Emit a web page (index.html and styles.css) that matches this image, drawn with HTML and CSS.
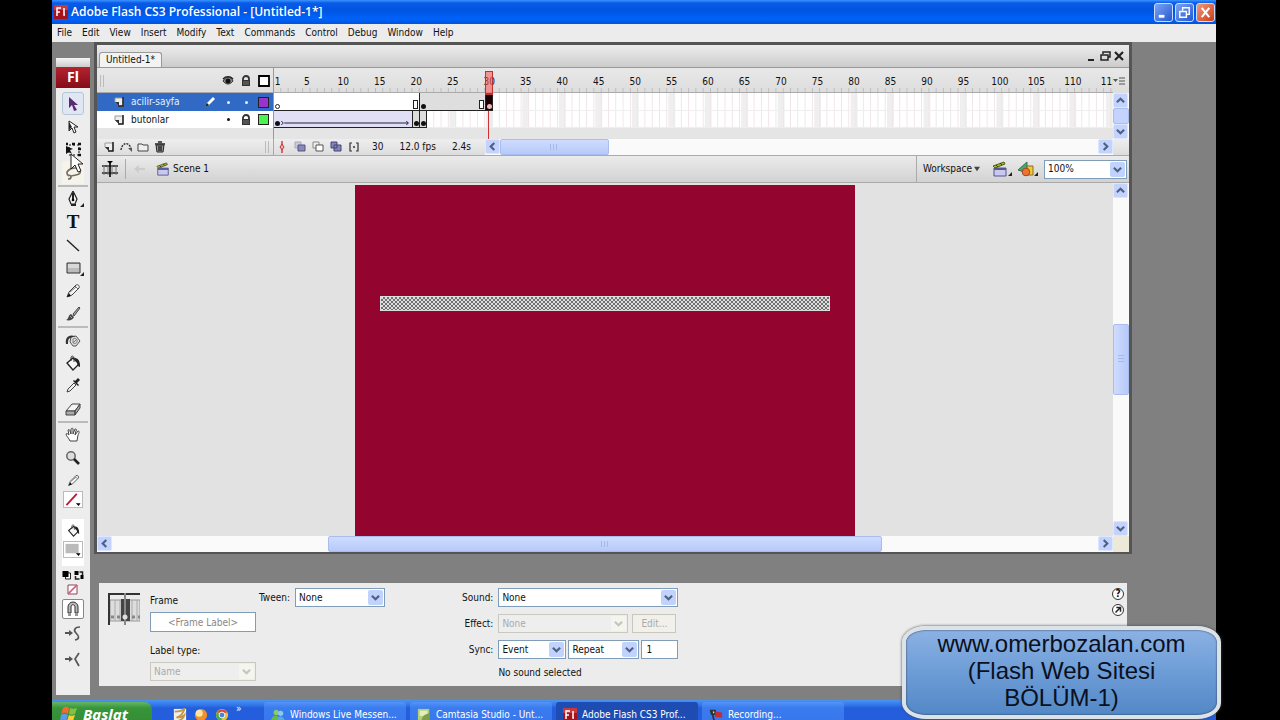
FILE: index.html
```
<!DOCTYPE html>
<html lang="en">
<head>
    <meta charset="UTF-8">
    <meta name="viewport" content="width=device-width, initial-scale=1.0">
    <title>Adobe Flash CS3 Professional - [Untitled-1*]</title>
    <link rel="stylesheet" href="styles.css">
</head>
<body>
    <!-- Shared icons -->
    <svg class="defs" aria-hidden="true">
        <symbol id="down" viewBox="0 0 10 10"><path d="M1 3l4 4 4-4" fill="none" stroke="currentColor" stroke-width="2.4"/></symbol>
        <symbol id="up" viewBox="0 0 10 10"><path d="M1 7l4-4 4 4" fill="none" stroke="currentColor" stroke-width="2.4"/></symbol>
        <symbol id="left" viewBox="0 0 10 10"><path d="M7 1L3 5l4 4" fill="none" stroke="currentColor" stroke-width="2.4"/></symbol>
        <symbol id="right" viewBox="0 0 10 10"><path d="M3 1l4 4-4 4" fill="none" stroke="currentColor" stroke-width="2.4"/></symbol>
        <symbol id="page" viewBox="0 0 12 12"><path d="M2 2h8v8H6L2 6z" fill="#eee" stroke="#999"/><path d="M2 6h4v4z" fill="#333"/><path d="M10 1v9H5" fill="none" stroke="#222" stroke-width="1.5"/></symbol>
        <symbol id="lock" viewBox="0 0 12 12"><path d="M3 6V4a3 3 0 0 1 6 0v2" fill="none" stroke="#333" stroke-width="1.8"/><path d="M2 5h8v6H2z" fill="#333"/><path d="M3 7h6M3 9h6" stroke="#777"/></symbol>
        <symbol id="clap" viewBox="0 0 16 16"><path d="M2 7h12v8H2z" fill="#c8c8f0" stroke="#555591"/><path d="M2 7h12v2H2z" fill="#555591"/><path d="M1 5l11-4 1 2L3 7z" fill="#a5b52c" stroke="#555c20"/><path d="M4 4l2 2m2-4l2 2" stroke="#333"/></symbol>
        <symbol id="pencil" viewBox="0 0 16 16"><path d="M2 14l2-5 7-7c2-1 4 1 3 3l-7 7z" fill="#f5f5f5" stroke="#444"/><path d="M2 14l2-4 2 3z" fill="#111"/><path d="M10 3l3 3M5 9l6-5" stroke="#777"/></symbol>
        <symbol id="bucket" viewBox="0 0 16 16"><path d="M2 8l6-5 6 6-6 6z" fill="#f6f6f6" stroke="#222" stroke-width="1.3"/><path d="M6 6V3c0-3 3-2 3 0v4" fill="none" stroke="#333"/><path d="M9 3c4 0 6 2 6 9-2 0-3-3-3-5z" fill="#222"/></symbol>
        <symbol id="fl" viewBox="0 0 14 14"><path d="M0 0h14v14H0z" fill="#a5141e"/><path d="M0 0h14v5H0z" fill="#c43a3e"/><path d="M3 11V3h4M3 7h3M10 3v7h1" fill="none" stroke="#fff" stroke-width="1.5"/></symbol>
    </svg>

    <div class="screen">
        <header class="titlebar">
            <svg class="i14"><use href="#fl"/></svg>
            <h1>Adobe Flash CS3 Professional - [Untitled-1*]</h1>
            <button class="win" aria-label="Minimize"><svg viewBox="0 0 18 18"><path d="M4 13h6" stroke="#fff" stroke-width="3"/></svg></button>
            <button class="win" aria-label="Restore"><svg viewBox="0 0 18 18"><path d="M7 7V4h7v7h-3M4 8h7v6H4z" fill="none" stroke="#fff" stroke-width="1.5"/></svg></button>
            <button class="win close" aria-label="Close"><svg viewBox="0 0 18 18"><path d="M5 4l8 10m0-10L5 14" stroke="#fff" stroke-width="2.2"/></svg></button>
        </header>

        <nav class="menubar">
            <button>File</button><button>Edit</button><button>View</button><button>Insert</button><button>Modify</button><button>Text</button><button>Commands</button><button>Control</button><button>Debug</button><button>Window</button><button>Help</button>
        </nav>

        <div class="workspace">
            <aside class="tools">
                <div class="tools-grip"></div>
                <div class="tools-logo">Fl</div>
                <div class="tool-group">
                    <button class="tool active" aria-label="Selection"><svg viewBox="0 0 16 16"><path d="M4 1v11l3-3 2 6 3-1-3-5h4z" fill="#5a2a72"/></svg></button>
                    <button class="tool" aria-label="Subselection"><svg viewBox="0 0 16 16"><path d="M4 2v10l3-3 2 5 2-1-2-5h4z" fill="#fff" stroke="#222"/><path d="M4 3v8l3-3z" fill="#222"/></svg></button>
                    <button class="tool" aria-label="Free Transform"><svg viewBox="0 0 16 16"><path d="M4 3h10v10H4z" fill="none" stroke="#111" stroke-dasharray="2 2"/><path d="M1 4v8l3-2 3 2-2-4 3-1z" fill="#111"/><path d="M1 2h2m4 0h3m3 0h3M13 7h3m-3 6h3" stroke="#111" stroke-width="2.5"/></svg></button>
                    <button class="tool lit" aria-label="Lasso"><svg viewBox="0 0 16 16"><path d="M4 11c-5-3 0-8 6-8 7 0 7 6 1 7l-5 1M3 10c4 0 4 4 0 4" fill="none" stroke="#766f62" stroke-width="1.7"/></svg></button>
                </div>
                <div class="tool-group">
                    <button class="tool more" aria-label="Pen"><svg viewBox="0 0 16 16"><path d="M8 0l4 8-2 5H6L4 8z" fill="#f5f5f5" stroke="#222" stroke-width="1.2"/><path d="M8 2v6M6 14h5" stroke="#222" stroke-width="2"/><circle cx="8" cy="9" r="1.3"/></svg></button>
                    <button class="tool type" aria-label="Text">T</button>
                    <button class="tool" aria-label="Line"><svg viewBox="0 0 16 16"><path d="M2 3l12 11" stroke="#222" stroke-width="1.4"/></svg></button>
                    <button class="tool more" aria-label="Rectangle"><svg viewBox="0 0 16 16"><path d="M2 3h13v10H2z" fill="#bbb" stroke="#333"/><path d="M3 4h11v4H3z" fill="#d8d8d8"/></svg></button>
                    <button class="tool" aria-label="Pencil"><svg><use href="#pencil"/></svg></button>
                    <button class="tool" aria-label="Brush"><svg viewBox="0 0 16 16"><path d="M8 8l6-7 1 1-6 8z" fill="#aaa" stroke="#444"/><path d="M1 14c3-1 2-5 5-6l3 3c-1 3-5 4-8 3z" fill="#444"/><path d="M5 10l2 2" stroke="#aaa"/></svg></button>
                </div>
                <div class="tool-group">
                    <button class="tool" aria-label="Ink Bottle"><svg viewBox="0 0 16 16"><path d="M6 5l5-1 4 5-4 5H8L5 10z" fill="#ddd" stroke="#555"/><path d="M1 12c-1-6 2-10 9-8L5 6c-2 1-2 3-2 6z" fill="#333"/><path d="M8 11l4-4M8 7c2-2 5 1 4 3s-4 2-4 0 0-2 0-3" fill="none" stroke="#777"/></svg></button>
                    <button class="tool" aria-label="Paint Bucket"><svg><use href="#bucket"/></svg></button>
                    <button class="tool" aria-label="Eyedropper"><svg viewBox="0 0 16 16"><path d="M2 14l1-3 6-6 2 2-6 6z" fill="#eee" stroke="#444"/><path d="M8 3l5 5 1-1-2-2 3-3-2-2-3 3-1-1z" fill="#222"/></svg></button>
                    <button class="tool" aria-label="Eraser"><svg viewBox="0 0 16 16"><path d="M1 10l6-7h8l-5 7z" fill="#f5f5f5" stroke="#444"/><path d="M1 10h9v4H1zM10 10l5-7v4l-5 7z" fill="#aaa" stroke="#444"/></svg></button>
                </div>
                <div class="tool-group">
                    <button class="tool" aria-label="Hand"><svg viewBox="0 0 16 16"><path d="M5 14C4 11 1 9 1 7c1-1 2 0 3 1L3 3c1-1 2 0 2 1l1 3V2c1-1 2-1 2 0v5l2-5c1 0 2 0 1 2l-1 4 3-4c2 0 1 2 0 4l-1 6z" fill="#fff" stroke="#444"/></svg></button>
                    <button class="tool" aria-label="Zoom"><svg viewBox="0 0 16 16"><circle cx="6" cy="6" r="4.2" fill="#ddd" stroke="#666" stroke-width="1.5"/><path d="M9 9l5 5" stroke="#222" stroke-width="2.6"/></svg></button>
                    <label class="tool small" for="stroke"><svg><use href="#pencil"/></svg></label>
                    <button class="swatch" id="stroke" aria-label="Stroke color"><svg viewBox="0 0 18 16"><path d="M2 14L13 2" stroke="#c01838" stroke-width="2"/><path d="M12 12h5l-2 3z"/></svg></button>
                </div>
                <div class="fill-group">
                    <label class="tool small" for="fill"><svg><use href="#bucket"/></svg></label>
                    <button class="swatch" id="fill" aria-label="Fill color"><svg viewBox="0 0 18 16"><path d="M1 2h14v10H1z" fill="#bbb"/><path d="M12 12h5l-2 3z"/></svg></button>
                </div>
                <div class="color-options">
                    <button aria-label="Black and white"><svg viewBox="0 0 10 12"><path d="M4 4h5v6H4z" fill="#fff" stroke="#222"/><path d="M1 2h6v6H1z"/></svg></button>
                    <button aria-label="Swap colors"><svg viewBox="0 0 10 12"><path d="M0 2h4v4H0zM6 6h3v4H6z"/><path d="M5 3h3v3M1 7v3h4" fill="none" stroke="#222" stroke-width="1.5"/></svg></button>
                </div>
                <button class="no-color" aria-label="No color"><svg viewBox="0 0 12 12"><path d="M1 1h9v9H1z" fill="#fff" stroke="#8c4656"/><path d="M1 10l9-9" stroke="#cf5b7c" stroke-width="1.7"/></svg></button>
                <button class="tool snap" aria-label="Snap to Objects"><svg viewBox="0 0 16 16"><path d="M3 12V6a5 5 0 0 1 10 0v6h-3V6c0-3-4-3-4 0v6z" fill="#bbb" stroke="#333"/><path d="M3 14h3m4 0h3" stroke="#333"/></svg></button>
                <button class="tool tall" aria-label="Smooth"><svg viewBox="0 0 16 16"><path d="M15 1c-5 0-7 3-4 6s4 6-1 7" fill="none" stroke="#555" stroke-width="1.7"/><path d="M0 7h6" stroke="#555" stroke-width="2"/><path d="M4 4l4 3-4 3z" fill="#555"/></svg></button>
                <button class="tool tall" aria-label="Straighten"><svg viewBox="0 0 16 16"><path d="M14 1l-4 6 4 7" fill="none" stroke="#555" stroke-width="1.7"/><path d="M0 7h5" stroke="#555" stroke-width="2"/><path d="M4 4l4 3-4 3z" fill="#555"/></svg></button>
            </aside>

            <main class="main">
                <section class="document">
                    <div class="tabstrip">
                        <button class="tab">Untitled-1*</button>
                        <div class="doc-buttons">
                            <button aria-label="Minimize document"><svg viewBox="0 0 12 12"><path d="M3 10h6" stroke="#222" stroke-width="2"/></svg></button>
                            <button aria-label="Restore document"><svg viewBox="0 0 12 12"><path d="M4 4V2h7v5H9M2 5h7v5H2z" fill="none" stroke="#222" stroke-width="1.5"/></svg></button>
                            <button aria-label="Close document"><svg viewBox="0 0 12 12"><path d="M2 2l8 8m0-8l-8 8" stroke="#222" stroke-width="2.2"/></svg></button>
                        </div>
                    </div>

                    <div class="timeline">
                        <div class="layers">
                            <div class="layer-head">
                                <span class="grip"></span>
                                <svg class="i12" viewBox="0 0 12 12"><path d="M1 6c3-5 8-5 10 0-3 4-7 4-10 0z" fill="#888" stroke="#333"/><path d="M1 4c3-3 7-3 10 0" fill="none" stroke="#222" stroke-width="1.5"/><circle cx="6" cy="6" r="2.5" fill="#111"/></svg>
                                <svg class="i12"><use href="#lock"/></svg>
                                <svg class="i12" viewBox="0 0 12 12"><path d="M1 1h10v10H1z" fill="#fff" stroke="#000" stroke-width="1.8"/></svg>
                            </div>
                            <div class="layer selected">
                                <svg class="i12"><use href="#page"/></svg>
                                <span>acilir-sayfa</span>
                                <svg class="i12" viewBox="0 0 12 12"><path d="M1 11l2-4 6-6 2 2-6 6z" fill="#fff"/><path d="M1 11l2-4 2 2z" fill="#111"/></svg>
                                <span class="dot"></span>
                                <span class="dot"></span>
                                <span class="chip purple"></span>
                            </div>
                            <div class="layer">
                                <svg class="i12"><use href="#page"/></svg>
                                <span>butonlar</span>
                                <span></span>
                                <span class="dot"></span>
                                <svg class="i12"><use href="#lock"/></svg>
                                <span class="chip green"></span>
                            </div>
                        </div>
                        <div class="frames" id="frames">
                            <div class="ruler"></div>
                            <div class="track first"></div>
                            <div class="track second"></div>
                            <div class="span a1"><i class="key empty"></i><i class="end"></i></div>
                            <div class="span a2"><i class="key"></i><i class="end"></i></div>
                            <div class="span a3"><i class="key"></i></div>
                            <div class="span b1"><i class="key"></i><svg viewBox="0 0 130 6"><path d="M1 1l2 2-2 2M4 3h124m-2-2l2 2-2 2" fill="none" stroke="#224"/></svg></div>
                            <div class="span b2"><i class="key"></i></div>
                            <div class="span b3"><i class="key"></i></div>
                            <div class="playhead"></div>
                        </div>
                        <div class="timeline-side">
                            <button class="panel-menu" aria-label="Panel menu"><svg viewBox="0 0 12 12"><path d="M0 4h5L2.500 7z" fill="#555"/><path d="M6 3h6M6 6h6M6 9h6" stroke="#555"/></svg></button>
                            <div class="scroll vertical">
                                <button aria-label="Scroll up"><svg><use href="#up"/></svg></button>
                                <div class="thumb whole"></div>
                                <button aria-label="Scroll down"><svg><use href="#down"/></svg></button>
                            </div>
                        </div>
                    </div>

                    <div class="timeline-foot">
                        <div class="layer-actions">
                            <button aria-label="Insert Layer"><svg><use href="#page"/></svg></button>
                            <button aria-label="Motion Guide"><svg viewBox="0 0 12 12"><path d="M1 9C2 2 8 0 11 7" fill="none" stroke="#333" stroke-width="1.4" stroke-dasharray="2 1"/><path d="M8 7h4v4z" fill="#555"/></svg></button>
                            <button aria-label="Insert Folder"><svg viewBox="0 0 12 12"><path d="M1 3h4l1 1h5v6H1z" fill="#eee" stroke="#444"/></svg></button>
                            <button aria-label="Delete Layer"><svg viewBox="0 0 12 12"><path d="M2 4h8l-1 7H3z" fill="#999" stroke="#222"/><path d="M1 3h10M4 1h4M5 5v5m2-5v5" stroke="#222" stroke-width="1.4"/></svg></button>
                            <span class="grip"></span>
                        </div>
                        <div class="onion">
                            <button aria-label="Center Frame"><svg viewBox="0 0 12 12"><path d="M6 0v12" stroke="#c33" stroke-width="1.4"/><path d="M6 3l2 3-2 3-2-3z" fill="#eaa" stroke="#c33"/></svg></button>
                            <button aria-label="Onion Skin"><svg viewBox="0 0 12 12"><path d="M1 1h6v6H1z" fill="#c8c8ec" stroke="#aaa"/><path d="M4 4h7v6H4z" fill="#8989bd" stroke="#55557d"/></svg></button>
                            <button aria-label="Onion Skin Outlines"><svg viewBox="0 0 12 12"><path d="M1 1h6v6H1z" fill="#eee" stroke="#888"/><path d="M4 4h7v6H4z" fill="#fff" stroke="#555"/></svg></button>
                            <button aria-label="Edit Multiple Frames"><svg viewBox="0 0 12 12"><path d="M1 1h6v6H1zM4 4h7v6H4z" fill="#8484b8" stroke="#444474"/></svg></button>
                            <button aria-label="Modify Onion Markers"><svg viewBox="0 0 12 12"><path d="M4 2H2v8h2m4-8h2v8H8" fill="none" stroke="#333" stroke-width="1.2"/><path d="M5 6h2" stroke="#333" stroke-width="1.5"/></svg></button>
                            <span class="num">30</span>
                            <span class="fps">12.0 fps</span>
                            <span>2.4s</span>
                        </div>
                        <div class="scroll horizontal">
                            <button aria-label="Scroll left"><svg><use href="#left"/></svg></button>
                            <div class="thumb short"></div>
                            <div class="rest long"></div>
                            <button aria-label="Scroll right"><svg><use href="#right"/></svg></button>
                        </div>
                    </div>

                    <div class="scenebar">
                        <button class="scene-button" aria-label="Show or hide timeline"><svg viewBox="0 0 18 18"><path d="M1 6h16M1 13h16" stroke="#222" stroke-width="1.5"/><path d="M3 5v10m4-10v10m4-10v10m4-10v10" stroke="#777"/><path d="M9 1v16" stroke="#111" stroke-width="1.7"/><path d="M6 1h6L9 4z"/></svg></button>
                        <span class="divider"></span>
                        <button class="back" aria-label="Back"><svg viewBox="0 0 12 12"><path d="M0 6l5-4v3h6v2H5v3z" fill="#ccc"/></svg></button>
                        <svg class="i14"><use href="#clap"/></svg>
                        <span class="scene-name">Scene 1</span>
                        <div class="scene-right">
                            <button class="workspace-menu">Workspace <svg viewBox="0 0 8 8"><path d="M0 1h8L4 7z" fill="#444"/></svg></button>
                            <button class="scene-button more" aria-label="Edit Scene"><svg><use href="#clap"/></svg></button>
                            <button class="scene-button more" aria-label="Edit Symbols"><svg viewBox="0 0 16 16"><path d="M6 5h9v9H6z" fill="#f3ca31" stroke="#85702a"/><path d="M0 9l9-8v11z" fill="#46a868" stroke="#377050"/><circle cx="8" cy="11" r="3.8" fill="#f17332" stroke="#a54627"/></svg></button>
                            <div class="combo zoom">
                                <select aria-label="Zoom level"><option>100%</option></select>
                                <svg><use href="#down"/></svg>
                            </div>
                        </div>
                    </div>

                    <div class="canvas">
                        <div class="pasteboard">
                            <div class="stage"><div class="shape"></div></div>
                        </div>
                        <div class="scroll vertical">
                            <button aria-label="Scroll stage up"><svg><use href="#up"/></svg></button>
                            <div class="rest before"></div>
                            <div class="thumb tall"></div>
                            <div class="rest before"></div>
                            <button aria-label="Scroll stage down"><svg><use href="#down"/></svg></button>
                        </div>
                        <div class="scroll horizontal">
                            <button aria-label="Scroll stage left"><svg><use href="#left"/></svg></button>
                            <div class="rest side"></div>
                            <div class="thumb wide"></div>
                            <div class="rest side"></div>
                            <button aria-label="Scroll stage right"><svg><use href="#right"/></svg></button>
                        </div>
                        <div class="corner"></div>
                    </div>
                </section>

                <section class="properties">
                    <svg class="frame-icon" viewBox="0 0 32 32"><path d="M2 7h30v21H2z" fill="#ddd" stroke="#999"/><path d="M7 7v21m5-21v21m12-21v21m5-21v21" stroke="#aaa"/><path d="M1 32V1h31" fill="none" stroke="#333" stroke-width="2"/><path d="M13 6h9v22h-9z" fill="#444"/><path d="M17 0v32" stroke="#888" stroke-width="2"/><path d="M3 24h9m12 0h8" stroke="#888" stroke-width="3" stroke-dasharray="3 3"/><circle cx="17" cy="24" r="2.500" fill="#ddd"/></svg>
                    <div class="frame-fields">
                        <label for="frame-label">Frame</label>
                        <input id="frame-label" type="text" placeholder="&lt;Frame Label&gt;">
                        <label for="label-type" class="type-label">Label type:</label>
                        <div class="combo disabled">
                            <select id="label-type" disabled><option>Name</option></select>
                            <svg><use href="#down"/></svg>
                        </div>
                    </div>
                    <div class="tween">
                        <label for="tween">Tween:</label>
                        <div class="combo">
                            <select id="tween"><option>None</option></select>
                            <svg><use href="#down"/></svg>
                        </div>
                    </div>
                    <div class="sound-fields">
                        <label for="sound">Sound:</label>
                        <div class="combo">
                            <select id="sound"><option>None</option></select>
                            <svg><use href="#down"/></svg>
                        </div>
                        <label for="effect">Effect:</label>
                        <div class="pair">
                            <div class="combo disabled effect">
                                <select id="effect" disabled><option>None</option></select>
                                <svg><use href="#down"/></svg>
                            </div>
                            <button class="edit" disabled>Edit...</button>
                        </div>
                        <label for="sync">Sync:</label>
                        <div class="pair sync">
                            <div class="combo">
                                <select id="sync"><option>Event</option></select>
                                <svg><use href="#down"/></svg>
                            </div>
                            <div class="combo">
                                <select aria-label="Loop mode"><option>Repeat</option></select>
                                <svg><use href="#down"/></svg>
                            </div>
                            <input type="text" value="1" aria-label="Repeat count">
                        </div>
                        <p>No sound selected</p>
                    </div>
                    <div class="help">
                        <button aria-label="Help">?</button>
                        <button aria-label="Edit ActionScript"><svg viewBox="0 0 12 12"><path d="M3 9l5-5M4 3h5v5" fill="none" stroke="#222" stroke-width="1.8"/></svg></button>
                    </div>
                </section>
            </main>
        </div>

        <footer class="taskbar">
            <button class="start"><svg viewBox="0 0 18 18"><path d="M3 3c3-2 4-1 6 0L8 9C6 8 4 7 1 9z" fill="#f46b30"/><path d="M10 3c2 1 4 1 7 0l-2 6c-3 1-4 1-6 0z" fill="#80c344"/><path d="M1 10c3-2 5-1 7 0l-2 6c-2-1-3-2-6 0z" fill="#5a9bea"/><path d="M9 10c2 1 3 1 6 0l-2 6c-3 1-4 1-6 0z" fill="#fc3"/></svg>Baslat</button>
            <div class="quick">
                <button aria-label="Editor"><svg viewBox="0 0 16 16"><path d="M1 1h14v14H1z" fill="#eee"/><path d="M2 4c4 0 9-1 11-3-1 5-4 8-9 10 3 0 7-1 9-3-1 4-4 6-8 7" fill="none" stroke="#c5943b" stroke-width="2"/></svg></button>
                <button aria-label="Player"><svg viewBox="0 0 16 16"><circle cx="8" cy="8" r="7" fill="#f1912b"/><circle cx="6" cy="6" r="4" fill="#fde6a4"/></svg></button>
                <button aria-label="Chrome"><svg viewBox="0 0 16 16"><circle cx="8" cy="8" r="7" fill="#e3c43b"/><path d="M2 5a7 7 0 0 1 12 0l-6 1z" fill="#d84937"/><path d="M2 5a7 7 0 0 0 5 10l2-5z" fill="#4bab50"/><circle cx="8" cy="8" r="3.3" fill="#4b81dc" stroke="#fff"/></svg></button>
                <span>»</span>
            </div>
            <div class="tasks">
                <button><svg viewBox="0 0 16 16"><circle cx="6" cy="5" r="3" fill="#8ccb60"/><circle cx="11" cy="6" r="3" fill="#8bc8ef"/><path d="M0 15c1-8 9-9 11 0z" fill="#67b74d"/><path d="M7 15c0-7 7-7 9 0z" fill="#5baadd"/></svg>Windows Live Messen...</button>
                <button><svg viewBox="0 0 16 16"><path d="M1 1h13v14H1z" fill="#b2ce72"/><path d="M3 3h9v6H3z" fill="#e5edbd"/><path d="M5 15c1-7 5-8 9-9v9z" fill="#7d9f49"/></svg>Camtasia Studio - Unt...</button>
                <button class="current"><svg><use href="#fl"/></svg>Adobe Flash CS3 Prof...</button>
                <button><svg viewBox="0 0 16 16"><path d="M3 3l3 12M2 3h5v4H3z" fill="#ddd" stroke="#333" stroke-width="2"/><path d="M7 4l8 1v6l-8-1z" fill="#c22c36"/></svg>Recording...</button>
            </div>
        </footer>

        <svg class="cursor" viewBox="0 0 14 20"><path d="M1 1v15l4-4 3 7 3-1-3-7h5z" fill="#fff" stroke="#222"/></svg>
        <div class="callout">www.omerbozalan.com<br>(Flash Web Sitesi<br>BÖLÜM-1)</div>
    </div>
    <script src="script.js"></script>
</body>
</html>
```

FILE: styles.css
```
* {
    box-sizing: border-box;
}
body {
    margin: 0;
    background-color: #000;
    color: #111;
    font-family: "DejaVu Sans Condensed", Tahoma, "DejaVu Sans", sans-serif;
    font-size: 10px;
    line-height: 14px;
}
button, input, select {
    margin: 0;
    padding: 0;
    border: 0;
    border-radius: 0;
    background: none;
    color: inherit;
    font: inherit;
}
svg {
    display: block;
    flex: none;
}
p {
    margin: 0;
}
.defs {
    position: absolute;
    width: 0;
    height: 0;
}
.i12 {
    width: 12px;
    height: 12px;
}
.i14 {
    width: 14px;
    height: 14px;
}
.screen {
    position: relative;
    display: flex;
    flex-direction: column;
    height: 100vh;
    padding: 0 64px 0 52px;
    overflow: hidden;
}

/* Title bar and menu */
.titlebar {
    display: flex;
    align-items: center;
    gap: 2px;
    height: 24px;
    flex: none;
    padding: 0 1px 0 2px;
    background: linear-gradient(#3a93ff 0, #0a5ce8 3px, #0054e0 10px, #0062fb 19px, #0054dc 24px);
}
.titlebar h1 {
    flex: 1;
    margin: 0 0 0 1px;
    color: #fff;
    font-family: "Open Sans", "Noto Sans", sans-serif;
    font-size: 12px;
    font-weight: 600;
}
.win {
    width: 19px;
    height: 19px;
    border: 1px solid #c9dcff;
    border-radius: 3px;
    background: linear-gradient(135deg, #7ba4f5, #2457d2);
}
.win.close {
    background: linear-gradient(135deg, #ee9a7c, #cc3d18);
}
.menubar {
    display: flex;
    gap: 10px;
    height: 18px;
    flex: none;
    padding: 0 5px;
    background-color: #ececec;
}

/* Tool panel */
.workspace {
    display: flex;
    flex: 1;
    min-height: 0;
    padding: 0 84px 0 4px;
    background-color: #808080;
}
.tools {
    width: 34px;
    margin: 16px 4px 5px 0;
    flex: none;
    display: flex;
    flex-direction: column;
    align-items: center;
    background-color: #ededed;
    overflow: hidden;
}
.tools-grip {
    width: 100%;
    height: 9px;
    flex: none;
    background: linear-gradient(#f5f5f5, #ccc);
}
.tools-logo {
    width: 100%;
    height: 21px;
    flex: none;
    margin-bottom: 4px;
    background: linear-gradient(#b32430, #850c18);
    color: #fff;
    font-family: "Noto Sans", sans-serif;
    font-size: 14px;
    font-weight: 700;
    line-height: 20px;
    text-align: center;
}
.tool-group {
    display: flex;
    flex-direction: column;
    align-items: center;
    width: 30px;
    flex: none;
    padding-bottom: 1px;
}
.tool-group + .tool-group {
    border-top: 2px solid #bbb;
}
.tool {
    position: relative;
    display: flex;
    align-items: center;
    justify-content: center;
    width: 22px;
    height: 23px;
    flex: none;
}
.tool svg {
    width: 16px;
    height: 16px;
}
.tool.active {
    border: 1px solid #b3c8d8;
    border-radius: 3px;
    background-color: #e0e6f3;
}
.tool.lit {
    background-color: #f5f3ea;
}
.tool.type {
    font-family: "Liberation Serif", serif;
    font-size: 19px;
    font-weight: 700;
}
.tool.small {
    height: 22px;
}
.tool.small svg {
    width: 13px;
    height: 13px;
}
.more {
    position: relative;
}
.more::after {
    content: "";
    position: absolute;
    right: 0;
    bottom: 3px;
    border-left: 4px solid transparent;
    border-bottom: 4px solid #222;
}
.swatch {
    width: 20px;
    height: 17px;
    flex: none;
    border: 1px solid #bbb;
    background-color: #fff;
}
.swatch svg {
    width: 18px;
    height: 15px;
}
.fill-group {
    display: flex;
    flex-direction: column;
    align-items: center;
    width: 22px;
    height: 47px;
    flex: none;
    margin-top: 10px;
    background-color: #fff;
}
.color-options {
    display: flex;
    gap: 2px;
    flex: none;
    margin: 3px 0;
}
.color-options svg {
    width: 11px;
    height: 12px;
}
.no-color svg {
    width: 12px;
    height: 12px;
}
.tool.snap {
    height: 20px;
    margin: 3px 0 2px;
    border: 1px solid #888;
    border-radius: 2px;
    background-color: #fff;
}
.tool.tall {
    height: 26px;
}

/* Document window */
.main {
    display: flex;
    flex-direction: column;
    flex: 1;
    min-width: 0;
}
.document {
    display: flex;
    flex-direction: column;
    flex: 1;
    min-height: 0;
    border: 3px solid #555;
    border-bottom-width: 2px;
    background-color: #e5e5e5;
}
.tabstrip {
    display: flex;
    align-items: flex-end;
    justify-content: space-between;
    height: 23px;
    flex: none;
    padding-left: 2px;
    border-bottom: 1px solid #999;
    background: linear-gradient(#ececec, #ccc);
}
.tab {
    height: 15px;
    padding: 0 6px;
    border: 1px solid #999;
    border-bottom: 0;
    border-radius: 3px 3px 0 0;
    background-color: #f3f3f3;
}
.doc-buttons {
    display: flex;
    gap: 2px;
    align-self: center;
    padding-right: 4px;
}
.doc-buttons svg {
    width: 12px;
    height: 12px;
}
.timeline {
    display: grid;
    grid-template-columns: 176px 1fr 16px;
    flex: none;
}
.layer-head {
    display: flex;
    align-items: center;
    gap: 6px;
    height: 25px;
    padding: 2px 3px 0;
    background: linear-gradient(#e8e8e8, #ddd);
    border-bottom: 1px solid #aaa;
}
.grip {
    width: 4px;
    height: 12px;
    margin-right: auto;
    border-left: 1px solid #bbb;
    border-right: 1px solid #bbb;
}
.layer {
    display: grid;
    grid-template-columns: 12px 67px 12px 12px 12px 12px;
    column-gap: 6px;
    align-items: center;
    justify-content: end;
    height: 17px;
    padding-right: 3px;
    background-color: #fff;
}
.layer.selected {
    height: 18px;
    background-color: #316ac5;
    color: #e8efff;
}
.dot {
    width: 3px;
    height: 3px;
    border-radius: 2px;
    background-color: currentColor;
    justify-self: center;
}
.chip {
    width: 11px;
    height: 11px;
    border: 1px solid #222;
}
.purple {
    background-color: #9a33c9;
}
.green {
    background-color: #4ef24e;
}

/* 115 frames share the width of the track */
.frames {
    display: grid;
    grid-template-columns: repeat(115, minmax(0, 1fr));
    grid-template-rows: 25px 18px 17px 11px;
    min-width: 0;
    border-left: 1px solid #999;
    overflow: hidden;
}
.ruler {
    grid-area: 1 / 1 / 2 / -1;
    border-bottom: 1px solid #aaa;
    background: linear-gradient(to right, transparent calc(100% - 1px), #bbb 0) 0 100% / calc(100% / 115) 4px repeat-x, linear-gradient(#e8e8e8, #ddd);
}
.track {
    border-bottom: 1px solid #eee;
    background: linear-gradient(to right, transparent calc(100% - 1px), #f0e4e8 0) 0 0 / calc(100% / 115) 100%, linear-gradient(to right, #fff 80%, #efefef 0) 0 0 / calc(100% / 23) 100%;
}
.first {
    grid-area: 2 / 1 / 3 / -1;
}
.second {
    grid-area: 3 / 1 / 4 / -1;
}
.frame-number {
    grid-row: 1;
    align-self: center;
    justify-self: center;
    padding-top: 2px;
}
.span {
    display: flex;
    align-items: flex-end;
    justify-content: space-between;
    min-width: 0;
    padding: 0 1px 1px;
    border-bottom: 1px solid #222;
    border-right: 1px solid #222;
}
.a1 {
    grid-area: 2 / 1 / 3 / 21;
    background-color: #fff;
}
.a2 {
    grid-area: 2 / 21 / 3 / 30;
    background-color: #dedede;
}
.a3 {
    grid-area: 2 / 30 / 3 / 31;
    background-color: #1c0008;
    color: #f3b6b6;
}
.b1 {
    grid-area: 3 / 1 / 4 / 20;
    background-color: #e0dff5;
}
.b2 {
    grid-area: 3 / 20 / 4 / 21;
    background-color: #ddd;
}
.b3 {
    grid-area: 3 / 21 / 4 / 22;
    background-color: #ddd;
}
.b1 svg {
    flex: 1;
    min-width: 0;
    height: 6px;
}
.key {
    width: 5px;
    height: 5px;
    flex: none;
    border-radius: 3px;
    background-color: currentColor;
}
.key.empty {
    border: 1px solid #222;
    background-color: #fff;
}
.end {
    width: 5px;
    height: 9px;
    border: 1px solid #222;
    background-color: #fff;
}
.playhead {
    grid-area: 1 / 30 / -1 / 31;
    margin: 3px 0 0 -1px;
    background: linear-gradient(#c33, #c33) 50% 100% / 1px calc(100% - 40px) no-repeat;
}
.playhead::before {
    content: "";
    display: block;
    height: 22px;
    border: 1px solid #b33;
    background-color: rgba(255, 90, 90, 0.6);
}
.timeline-side {
    display: flex;
    flex-direction: column;
}
.panel-menu {
    height: 25px;
    flex: none;
    background: linear-gradient(#e8e8e8, #ddd);
}
.panel-menu svg {
    width: 12px;
    height: 12px;
}
.timeline-foot {
    display: grid;
    grid-template-columns: 176px 212px 1fr;
    height: 17px;
    flex: none;
    padding-right: 16px;
    border-bottom: 1px solid #aaa;
    background: linear-gradient(#eee, #ddd);
}
.layer-actions {
    display: flex;
    align-items: center;
    gap: 5px;
    padding: 0 4px 0 6px;
}
.layer-actions svg, .onion svg {
    width: 12px;
    height: 12px;
}
.layer-actions .grip {
    margin: 0 0 0 auto;
}
.onion {
    display: flex;
    align-items: center;
    gap: 6px;
    padding-left: 2px;
    border-left: 1px solid #aaa;
    white-space: nowrap;
}
.onion .num {
    margin: 0 10px 0 6px;
}
.onion .fps {
    margin-right: 10px;
}

/* Scroll bars */
.scroll {
    display: flex;
    background-color: #fafafa;
}
.scroll.vertical {
    flex-direction: column;
    flex: 1;
}
.scroll button {
    display: flex;
    align-items: center;
    justify-content: center;
    width: 15px;
    height: 15px;
    flex: none;
    border: 1px solid #dde7ff;
    border-radius: 2px;
    background-color: #c3d3fd;
    color: #4d6185;
}
.scroll svg {
    width: 9px;
    height: 9px;
}
.thumb {
    border: 1px solid #a9bdef;
    border-radius: 2px;
    background: repeating-linear-gradient(to right, #a3b8ec 0 1px, transparent 1px 3px) 50% 50% / 9px 6px no-repeat, linear-gradient(#cfdcff, #b6c9f8);
}
.vertical .thumb {
    background: repeating-linear-gradient(#a3b8ec 0 1px, transparent 1px 3px) 50% 50% / 6px 9px no-repeat, linear-gradient(to right, #cfdcff, #b6c9f8);
}
.vertical .thumb.whole {
    flex: 1;
    background: #c3d3fd;
}
.thumb.short {
    flex: 18;
}
.rest.long {
    flex: 82;
}
.rest.before {
    flex: 39;
}
.thumb.tall {
    flex: 21;
}
.rest.side {
    flex: 22;
}
.thumb.wide {
    flex: 56;
}

/* Scene bar */
.scenebar {
    display: flex;
    align-items: center;
    height: 27px;
    flex: none;
    padding-left: 4px;
    border-bottom: 1px solid #aaa;
    background: linear-gradient(#ebebeb, #d2d2d2);
}
.scene-button {
    width: 20px;
    height: 20px;
}
.scene-button svg {
    width: 18px;
    height: 18px;
}
.divider {
    width: 1px;
    height: 20px;
    margin: 0 8px 0 4px;
    background-color: #aaa;
}
.back {
    margin-right: 10px;
}
.back svg {
    width: 12px;
    height: 12px;
}
.scene-name {
    margin-left: 3px;
}
.scene-right {
    display: flex;
    align-items: center;
    gap: 6px;
    height: 100%;
    margin-left: auto;
    padding: 0 2px 0 6px;
    border-left: 1px solid #aaa;
}
.workspace-menu {
    display: flex;
    align-items: center;
    gap: 2px;
    margin-right: 6px;
}
.workspace-menu svg {
    width: 6px;
    height: 6px;
}
.scene-right .scene-button svg {
    width: 16px;
    height: 16px;
}
.combo {
    display: grid;
    grid-template-columns: 1fr 15px;
    height: 19px;
    border: 1px solid #7f9db9;
    padding: 1px;
    background-color: #fff;
}
.combo select {
    grid-area: 1 / 1 / 2 / 3;
    min-width: 0;
    padding-left: 2px;
    appearance: none;
}
.combo svg {
    grid-area: 1 / 2 / 2 / 3;
    width: 15px;
    height: 15px;
    padding: 3px;
    border-radius: 2px;
    background-color: #c1d2fc;
    color: #4d6185;
    pointer-events: none;
}
.combo.disabled {
    border-color: #cac9c0;
    background-color: #eee;
    color: #aaa;
}
.combo.disabled select {
    opacity: 1;
}
.combo.disabled svg {
    background-color: #f5f5f0;
    color: #c5c5ba;
}
.combo.zoom {
    width: 83px;
}

/* Stage */
.canvas {
    display: grid;
    grid-template-columns: 1fr 16px;
    grid-template-rows: 1fr 16px;
    flex: 1;
    min-height: 0;
}
.pasteboard {
    display: flex;
    justify-content: center;
    padding-top: 2px;
    background-color: #e2e2e2;
}
.stage {
    width: 500px;
    padding: 111px 25px 0;
    background-color: #93042f;
}
.shape {
    height: 15px;
    background: conic-gradient(#707070 25%, #ddd 0 50%, #707070 0 75%, #ddd 0) 0 0 / 4px 4px;
    border: 1px solid #ddd;
}
.corner {
    background-color: #ece9d8;
}

/* Properties panel */
.properties {
    display: flex;
    align-items: flex-start;
    height: 103px;
    flex: none;
    margin: 29px 5px 14px;
    padding: 5px 3px 3px 9px;
    background-color: #ececec;
}
.frame-icon {
    width: 32px;
    height: 32px;
    margin: 5px 10px 0 0;
}
.frame-fields {
    display: flex;
    flex-direction: column;
    width: 106px;
    padding-top: 6px;
}
.frame-fields input, .sync input {
    border: 1px solid #7f9db9;
    background-color: #fff;
}
.frame-fields input {
    height: 20px;
    margin: 4px 0 12px;
    text-align: center;
}
.frame-fields input::placeholder {
    color: #888;
}
.type-label {
    margin-bottom: 4px;
}
.tween {
    display: flex;
    align-items: center;
    gap: 5px;
    padding-left: 3px;
}
.tween .combo {
    width: 90px;
}
.sound-fields {
    display: grid;
    grid-template-columns: auto 180px;
    gap: 7px 5px;
    align-items: center;
    margin-left: 77px;
}
.sound-fields label {
    text-align: right;
}
.sound-fields p {
    grid-column: 2;
}
.pair {
    display: flex;
    gap: 4px;
}
.effect {
    flex: 1;
}
.edit {
    width: 44px;
    margin-right: 2px;
    border: 1px solid #c9c7ba;
    background-color: #f1f0ea;
    color: #aaa;
}
.sync {
    display: grid;
    grid-template-columns: 68px 71px 1fr;
    gap: 2px;
}
.sync input {
    min-width: 0;
    padding-left: 4px;
}
.help {
    display: flex;
    flex-direction: column;
    gap: 4px;
    margin-left: auto;
}
.help button {
    display: flex;
    align-items: center;
    justify-content: center;
    width: 12px;
    height: 12px;
    border: 1px solid #333;
    border-radius: 6px;
    background-color: #fff;
    font-weight: 700;
}
.help svg {
    width: 10px;
    height: 10px;
}

/* Task bar */
.taskbar {
    display: flex;
    align-items: flex-start;
    height: 20px;
    flex: none;
    padding-top: 2px;
    background: linear-gradient(#4a94f2 0, #3277e8 5px, #245edc 8px);
}
.taskbar button {
    display: flex;
    align-items: center;
    height: 26px;
    white-space: nowrap;
}
.taskbar svg {
    width: 14px;
    height: 14px;
}
.taskbar .start {
    gap: 5px;
    width: 100px;
    height: 24px;
    padding-left: 8px;
    border-radius: 0 8px 8px 0;
    background: linear-gradient(#67b665, #37953a 6px, #338b35);
    color: #fff;
    font-family: "Noto Sans", sans-serif;
    font-size: 15px;
    font-style: italic;
    font-weight: 700;
}
.taskbar .start svg {
    width: 18px;
    height: 18px;
}
.quick {
    display: flex;
    gap: 7px;
    width: 98px;
    margin: 0 6px 0 8px;
    padding-left: 13px;
    color: #fff;
}
.tasks {
    display: flex;
    gap: 4px;
    flex: 1;
    max-width: 580px;
}
.tasks button {
    flex: 1;
    gap: 5px;
    padding-left: 7px;
    border-radius: 3px;
    background: linear-gradient(#5593f4, #3a7bf0 6px, #3876ea);
    color: #fff;
}
.tasks .current {
    background: #1e4cb2;
}

/* Overlays */
.cursor {
    position: absolute;
    left: 70px;
    top: 153px;
    width: 14px;
    height: 20px;
}
.callout {
    position: absolute;
    right: 59px;
    bottom: 1px;
    width: 319px;
    padding: 0 0 4px;
    border: 4px solid #dbe2e8;
    border-radius: 24px / 16px;
    background: linear-gradient(#8bb2e4, #6d9cd6 50%, #5288c6);
    box-shadow: inset 0 0 2px #223, 0 0 3px #444;
    color: #0a1020;
    font-family: "Liberation Sans", Arial, sans-serif;
    font-size: 24px;
    line-height: 27px;
    text-align: center;
}
```

FILE: script.js
```
const frames = document.getElementById("frames");
const playhead = frames.querySelector(".playhead");

// Ruler numbers: the first frame, then every fifth one
for (let n = 0; n <= 115; n += 5) {
    const label = document.createElement("span");
    label.className = "frame-number";
    label.textContent = n || 1;
    label.style.gridColumn = n || 1;
    frames.insertBefore(label, playhead);
}
```
